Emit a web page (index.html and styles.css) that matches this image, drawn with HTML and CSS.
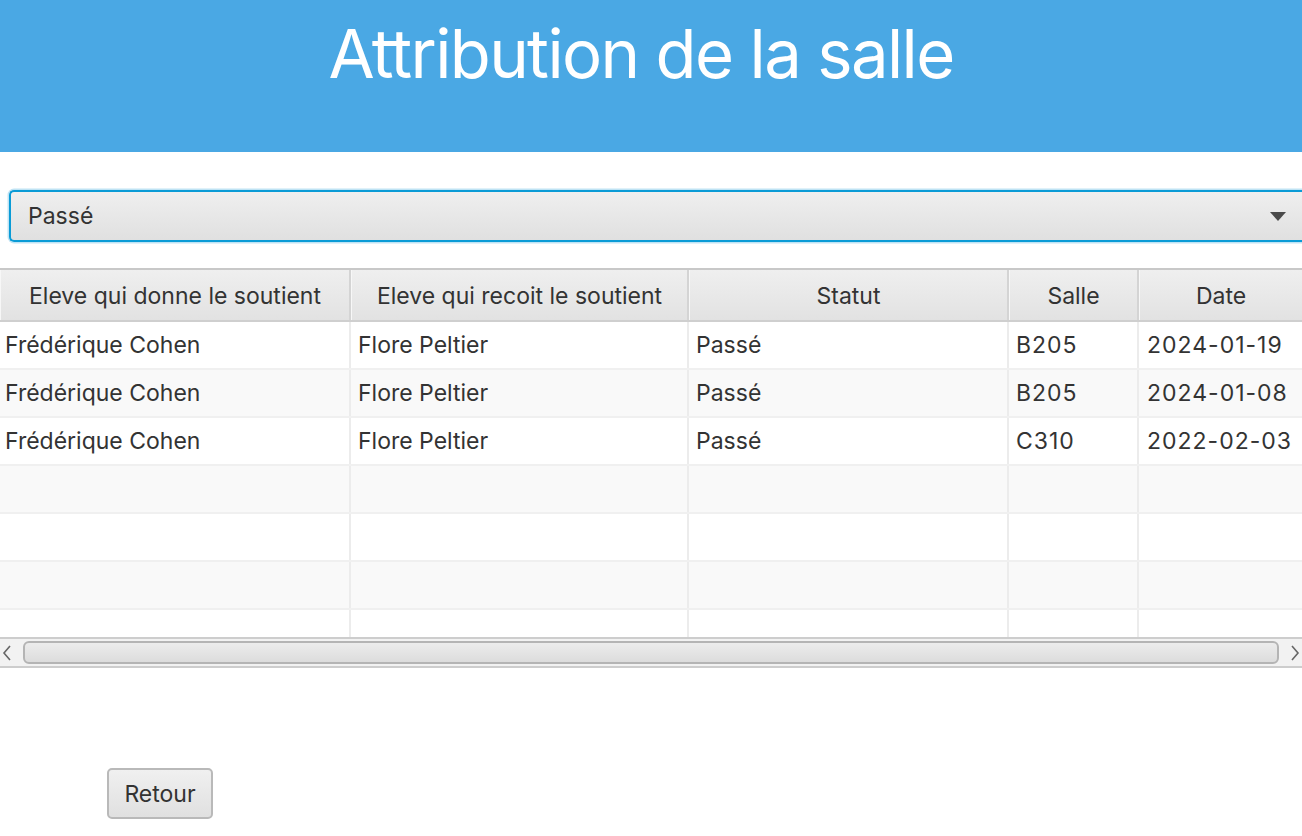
FILE: index.html
```html
<!DOCTYPE html>
<html lang="fr">
<head>
<meta charset="utf-8">
<title>Attribution de la salle</title>
<link rel="stylesheet" href="styles.css">
</head>
<body>
<header class="banner"><h1 class="title">Attribution de la salle</h1></header>
<div class="combo-wrap">
  <div class="combo">
    <span class="combo-text">Passé</span>
    <span class="combo-arrow"></span>
  </div>
</div>
<div class="table">
  <div class="row head">
    <div class="cell c1">Eleve qui donne le soutient</div>
    <div class="cell c2">Eleve qui recoit le soutient</div>
    <div class="cell c3">Statut</div>
    <div class="cell c4">Salle</div>
    <div class="cell c5">Date</div>
  </div>
  <div class="body">
    <div class="row"><div class="cell c1">Frédérique Cohen</div><div class="cell c2">Flore Peltier</div><div class="cell c3">Passé</div><div class="cell c4 num">B205</div><div class="cell c5 num">2024-01-19</div></div>
    <div class="row"><div class="cell c1">Frédérique Cohen</div><div class="cell c2">Flore Peltier</div><div class="cell c3">Passé</div><div class="cell c4 num">B205</div><div class="cell c5 num">2024-01-08</div></div>
    <div class="row"><div class="cell c1">Frédérique Cohen</div><div class="cell c2">Flore Peltier</div><div class="cell c3">Passé</div><div class="cell c4 num">C310</div><div class="cell c5 num">2022-02-03</div></div>
    <div class="row"><div class="cell c1"></div><div class="cell c2"></div><div class="cell c3"></div><div class="cell c4"></div><div class="cell c5"></div></div>
    <div class="row"><div class="cell c1"></div><div class="cell c2"></div><div class="cell c3"></div><div class="cell c4"></div><div class="cell c5"></div></div>
    <div class="row"><div class="cell c1"></div><div class="cell c2"></div><div class="cell c3"></div><div class="cell c4"></div><div class="cell c5"></div></div>
    <div class="row"><div class="cell c1"></div><div class="cell c2"></div><div class="cell c3"></div><div class="cell c4"></div><div class="cell c5"></div></div>
  </div>
  <div class="hscroll">
    <svg class="arrow" width="12" height="20" viewBox="0 0 12 20"><path d="M9 3 L3 10 L9 17" fill="none" stroke="#666" stroke-width="1.6"/></svg>
    <div class="track"><div class="thumb"></div></div>
    <svg class="arrow" width="12" height="20" viewBox="0 0 12 20"><path d="M3 3 L9 10 L3 17" fill="none" stroke="#666" stroke-width="1.6"/></svg>
  </div>
</div>
<div class="footer">
  <button class="btn">Retour</button>
</div>
</body>
</html>
```
FILE: styles.css
```css
html, body {
  margin: 0;
  padding: 0;
  background: #ffffff;
  font-family: Inter, "Noto Sans", sans-serif;
  color: #333333;
  overflow: hidden;
  width: 1302px;
  height: 836px;
}
.banner {
  background: #4aa8e4;
  height: 152px;
  display: flex;
  justify-content: center;
  padding-right: 20px;
  box-sizing: border-box;
}
.title {
  margin: 0;
  font-weight: 400;
  font-size: 67px;
  color: #ffffff;
  line-height: 1;
  padding-top: 20px;
  letter-spacing: -1.65px;
}
.combo-wrap {
  padding: 38px 0 0 9px;
  height: 116px;
  box-sizing: border-box;
}
.combo {
  height: 52px;
  box-sizing: border-box;
  border: 2px solid #0a9bd6;
  border-right: none;
  border-radius: 5px 0 0 5px;
  box-shadow: 0 0 0 1.5px #bfe3f4;
  background: linear-gradient(#efefef, #e0e0e0);
  display: flex;
  align-items: center;
  padding-left: 17px;
  padding-right: 16px;
}
.combo-text {
  flex: 1;
  font-size: 23px;
  color: #333;
}
.combo-arrow {
  width: 0;
  height: 0;
  border-left: 8px solid transparent;
  border-right: 8px solid transparent;
  border-top: 9px solid #4a4a4a;
}
.table {
  border-top: 2px solid #c8c8c8;
}
.row {
  display: flex;
  height: 48px;
}
.cell {
  box-sizing: border-box;
  border-right: 2px solid #ececec;
  display: flex;
  align-items: center;
  padding-left: 5px;
  font-size: 23px;
  white-space: nowrap;
  overflow: hidden;
}
.num { letter-spacing: 1px; }
.c1 { width: 351px; }
.c2 { width: 338px; padding-left: 7px; }
.c3 { width: 320px; padding-left: 7px; }
.c4 { width: 130px; padding-left: 7px; }
.c5 { flex: 1; border-right: none; padding-left: 8px; }
.head {
  height: 52px;
  background: linear-gradient(#efefef, #e2e2e2);
  border-bottom: 2px solid #cfcfcf;
  box-sizing: border-box;
}
.head .cell {
  justify-content: center;
  padding-left: 0;
  border-right: 2px solid #d4d4d4;
  border-left: 1px solid #f7f7f7;
  padding-top: 2px;
}
.head .c5 { border-right: none; }
.body .row {
  border-bottom: 2px solid #f0f0f0;
  box-sizing: border-box;
}
.body .row:nth-child(odd) { background: #ffffff; }
.body .row:nth-child(even) { background: #f9f9f9; }
.body .row:last-child { height: 27px; border-bottom: none; }
.hscroll {
  height: 31px;
  box-sizing: border-box;
  border-top: 2px solid #cdcdcd;
  border-bottom: 2px solid #cdcdcd;
  background: #f2f2f2;
  display: flex;
  align-items: center;
  padding: 0 1px;
}
.arrow { flex: none; }
.track {
  flex: 1;
  padding: 0 10px;
  height: 23px;
  display: flex;
}
.thumb {
  flex: 1;
  border: 2px solid #b4b4b4;
  border-radius: 6px;
  background: linear-gradient(#ececec, #dcdcdc);
}
.footer {
  padding: 100px 0 0 107px;
}
.btn {
  width: 106px;
  height: 51px;
  font-family: Inter, "Noto Sans", sans-serif;
  font-size: 23px;
  color: #333;
  border: 2px solid #b9b9b9;
  border-radius: 5px;
  background: linear-gradient(#f0f0f0, #e0e0e0);
  padding: 0;
}
```
